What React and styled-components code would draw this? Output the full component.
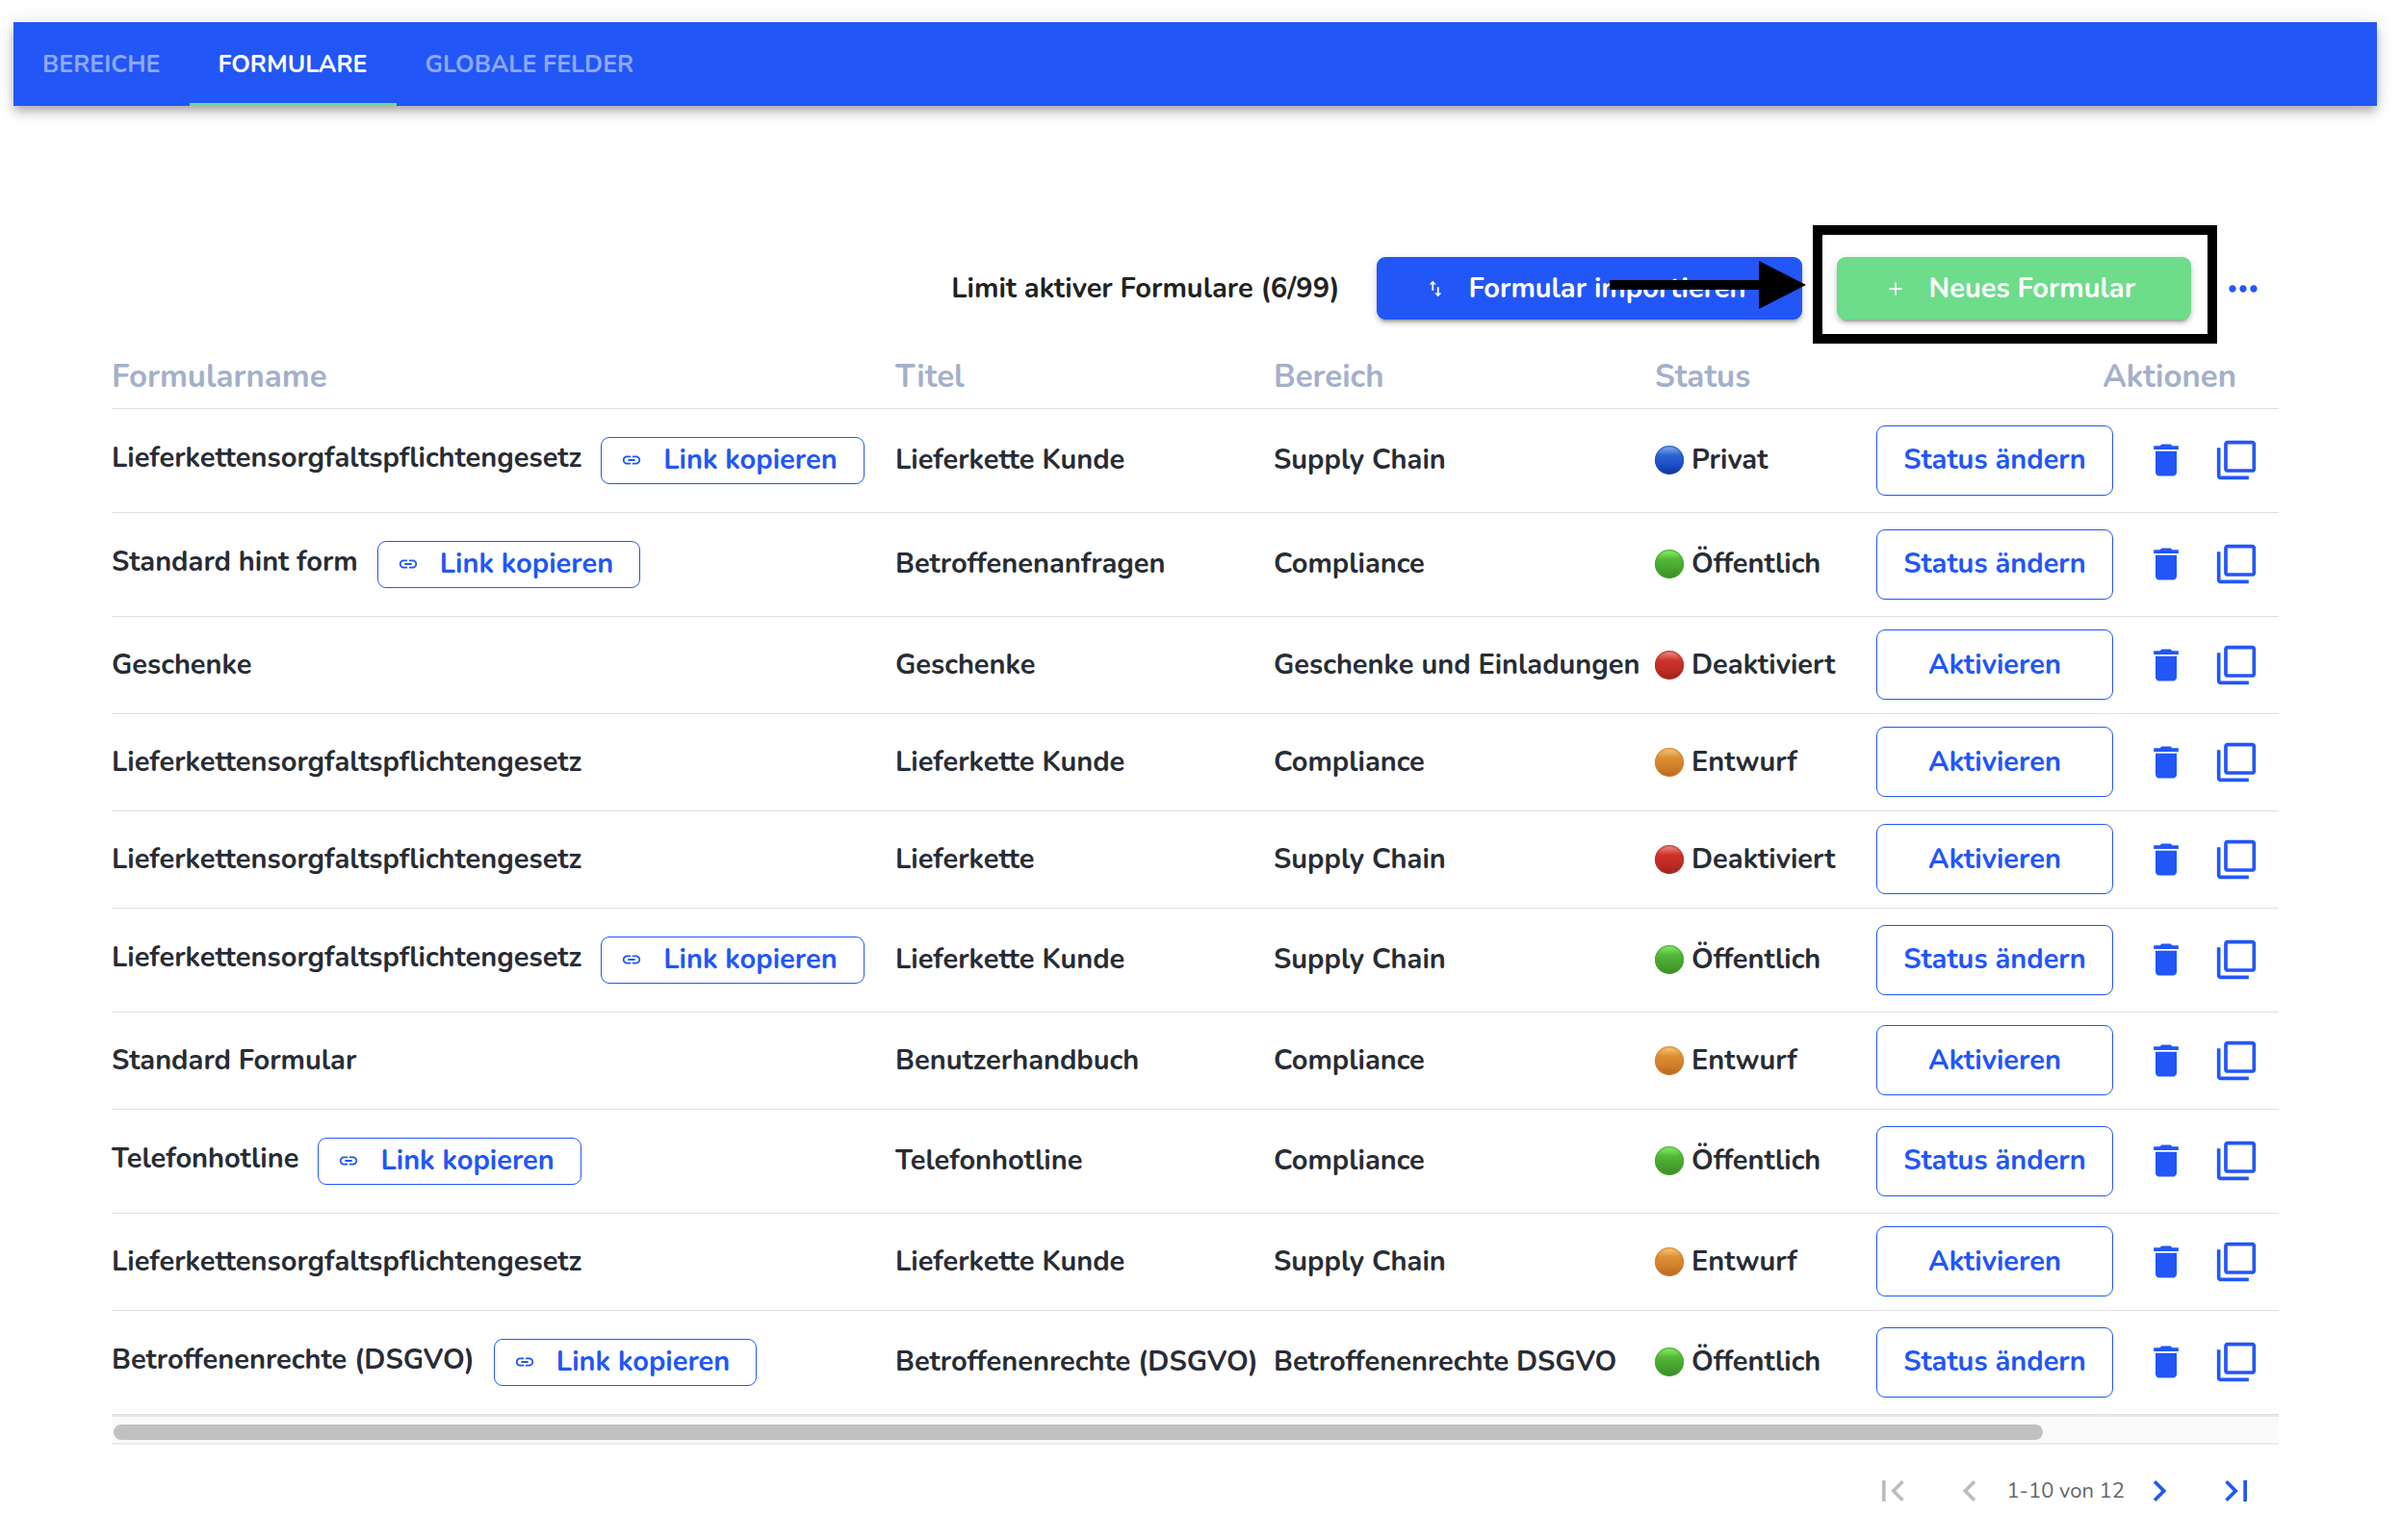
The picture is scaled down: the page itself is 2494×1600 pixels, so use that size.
import React, { useState } from 'react';
import styled, { createGlobalStyle } from 'styled-components';
import {
  MdAdd,
  MdChevronLeft,
  MdChevronRight,
  MdDelete,
  MdFilterNone,
  MdFirstPage,
  MdImportExport,
  MdInsertLink,
  MdLastPage,
  MdMoreHoriz,
} from 'react-icons/md';

const blue = '#2256f7';
const green = '#6ddc8b';
const ink = '#282c34';
const muted = '#a4b0cb';
const line = '#e0e0e0';

const GlobalStyle = createGlobalStyle`
  * {
    box-sizing: border-box;
  }

  body {
    margin: 0;
    background: #fff;
    color: ${ink};
    font-family: Nunito, "Noto Sans", sans-serif;
    font-size: 29px;
    font-weight: 700;
    line-height: 40px;
  }

  button {
    font: inherit;
    cursor: pointer;
  }
`;

const Page = styled.div`
  padding: 23px 25px 0 14px;
`;

const TabBar = styled.nav`
  display: flex;
  background: ${blue};
  box-shadow: 0 4px 8px -2px rgba(0, 0, 0, .2), 0 8px 10px rgba(0, 0, 0, .14), 0 2px 20px rgba(0, 0, 0, .12);
`;

const Tab = styled.a`
  height: 87px;
  padding: 0 30px;
  border-bottom: 3px solid ${(props) => (props.$active ? green : 'transparent')};
  color: ${(props) => (props.$active ? '#fff' : '#8ea9fb')};
  font-size: 25px;
  line-height: 88px;
  text-decoration: none;
  text-transform: uppercase;
`;

const Content = styled.main`
  padding: 157px 102px 0;
`;

const Toolbar = styled.div`
  display: flex;
  align-items: center;
  justify-content: flex-end;
  padding-right: 15px;
`;

const Limit = styled.span`
  margin-right: 38px;
  color: #222;
`;

const ActionButton = styled.button`
  display: flex;
  align-items: center;
  gap: 24px;
  height: 65px;
  padding: 0 58px 0 50px;
  border: 0;
  border-radius: 9px;
  background: ${(props) => (props.$color)};
  box-shadow: 0 6px 2px -4px rgba(0, 0, 0, .2), 0 4px 4px rgba(0, 0, 0, .14), 0 2px 10px rgba(0, 0, 0, .12);
  color: #fff;
`;

const Highlight = styled.div`
  position: relative;
  margin-left: 36px;

  &::after {
    content: '';
    position: absolute;
    inset: -33px -27px -25px -25px;
    border: 10px solid #000;
    pointer-events: none;
  }
`;

const Arrow = styled.svg`
  position: absolute;
  right: 100%;
  top: 4px;
  margin-right: 32px;
  pointer-events: none;
`;

const MoreButton = styled.button`
  display: flex;
  margin-left: 32px;
  padding: 0;
  border: 0;
  background: none;
  color: ${blue};
`;

const Table = styled.table`
  width: 100%;
  margin-top: 24px;
  border-collapse: collapse;
  table-layout: fixed;
`;

const Th = styled.th`
  width: ${(props) => props.$width || 'auto'};
  height: 68px;
  padding: 4px ${(props) => (props.$right ? '44px' : '0')} 0 0;
  border-bottom: 1px solid ${line};
  color: ${muted};
  font-size: 33px;
  font-weight: 700;
  text-align: ${(props) => (props.$right ? 'right' : 'left')};
`;

const Tr = styled.tr`
  height: ${(props) => (props.$tall ? '108px' : '101px')};
`;

const Td = styled.td`
  padding: 0;
  border-bottom: 1px solid ${line};
  white-space: nowrap;
`;

const Cell = styled.div`
  display: flex;
  align-items: center;
  gap: ${(props) => props.$gap || '0'};
`;

const FormName = styled.span`
  padding-bottom: ${(props) => (props.$raised ? '4px' : '0')};
`;

const LinkButton = styled.button`
  display: flex;
  align-items: center;
  gap: 22px;
  height: 49px;
  padding: 0 27px 0 20px;
  border: 1px solid ${blue};
  border-radius: 9px;
  background: #fff;
  color: ${blue};
`;

const StatusButton = styled.button`
  width: 246px;
  height: 73px;
  margin-right: 33px;
  border: 1px solid ${blue};
  border-radius: 9px;
  background: #fff;
  color: ${blue};
`;

const IconButton = styled.button`
  display: flex;
  padding: ${(props) => props.$padding || '0'};
  border: 0;
  background: none;
  color: ${blue};

  &:disabled {
    color: #bdbdbd;
  }
`;

const Dot = styled.span`
  width: 30px;
  height: 30px;
  border-radius: 50%;
  background: linear-gradient(${(props) => props.$colors.join(', ')});
  box-shadow: inset 0 0 2px 1px ${(props) => props.$colors[2]};
`;

const ScrollTrack = styled.div`
  height: 31px;
  padding: 8px 2px 7px;
  border-top: 2px solid #e6e6e6;
  border-bottom: 2px solid #ececec;
  background: #fafafa;
`;

const ScrollThumb = styled.div`
  width: 89.2%;
  height: 16px;
  border-radius: 8px;
  background: #c1c1c1;
`;

const Pagination = styled.div`
  display: flex;
  align-items: center;
  justify-content: flex-end;
  padding: 8px 4px 0 0;
`;

const PageInfo = styled.span`
  margin: 0 -4px 0 -2px;
  color: #666;
  font-size: 22px;
  font-weight: 400;
`;

const statuses = {
  Privat: ['#8fb8f4', '#2f63d0', '#1b4fc4', '#12309c'],
  Öffentlich: ['#8cf86f', '#55b739', '#46a32e', '#3c8a28'],
  Deaktiviert: ['#ee9a95', '#cf332b', '#bd2c24', '#97241e'],
  Entwurf: ['#f6cf85', '#dd8f33', '#d07f2b', '#b8631f'],
};

const forms = [
  { name: 'Lieferkettensorgfaltspflichtengesetz', link: true, title: 'Lieferkette Kunde', area: 'Supply Chain', status: 'Privat' },
  { name: 'Standard hint form', link: true, title: 'Betroffenenanfragen', area: 'Compliance', status: 'Öffentlich' },
  { name: 'Geschenke', title: 'Geschenke', area: 'Geschenke und Einladungen', status: 'Deaktiviert' },
  { name: 'Lieferkettensorgfaltspflichtengesetz', title: 'Lieferkette Kunde', area: 'Compliance', status: 'Entwurf' },
  { name: 'Lieferkettensorgfaltspflichtengesetz', title: 'Lieferkette', area: 'Supply Chain', status: 'Deaktiviert' },
  { name: 'Lieferkettensorgfaltspflichtengesetz', link: true, title: 'Lieferkette Kunde', area: 'Supply Chain', status: 'Öffentlich' },
  { name: 'Standard Formular', title: 'Benutzerhandbuch', area: 'Compliance', status: 'Entwurf' },
  { name: 'Telefonhotline', link: true, title: 'Telefonhotline', area: 'Compliance', status: 'Öffentlich' },
  { name: 'Lieferkettensorgfaltspflichtengesetz', title: 'Lieferkette Kunde', area: 'Supply Chain', status: 'Entwurf' },
  { name: 'Betroffenenrechte (DSGVO)', link: true, title: 'Betroffenenrechte (DSGVO)', area: 'Betroffenenrechte DSGVO', status: 'Öffentlich' },
];

const tabs = ['Bereiche', 'Formulare', 'Globale Felder'];

function FormRow({ form }) {
  return (
    <Tr $tall={form.link}>
      <Td>
        <Cell $gap="20px">
          <FormName $raised={form.link}>{form.name}</FormName>
          {form.link && (
            <LinkButton type="button">
              <MdInsertLink size={22} />
              Link kopieren
            </LinkButton>
          )}
        </Cell>
      </Td>
      <Td>{form.title}</Td>
      <Td>{form.area}</Td>
      <Td>
        <Cell $gap="8px">
          <Dot $colors={statuses[form.status]} />
          {form.status}
        </Cell>
      </Td>
      <Td>
        <Cell>
          <StatusButton type="button">
            {form.link ? 'Status ändern' : 'Aktivieren'}
          </StatusButton>
          <Cell $gap="29px">
            <IconButton type="button" aria-label="Löschen">
              <MdDelete size={44} />
            </IconButton>
            <IconButton type="button" aria-label="Duplizieren">
              <MdFilterNone size={44} />
            </IconButton>
          </Cell>
        </Cell>
      </Td>
    </Tr>
  );
}

function App() {
  const [activeTab, setActiveTab] = useState('Formulare');

  return (
    <Page>
      <GlobalStyle />
      <TabBar>
        {tabs.map((tab) => (
          <Tab key={tab} href="#" $active={tab === activeTab} onClick={() => setActiveTab(tab)}>
            {tab}
          </Tab>
        ))}
      </TabBar>
      <Content>
        <Toolbar>
          <Limit>Limit aktiver Formulare (6/99)</Limit>
          <ActionButton type="button" $color={blue}>
            <MdImportExport size={22} />
            Formular importieren
          </ActionButton>
          <Highlight>
            <ActionButton type="button" $color={green}>
              <MdAdd size={22} />
              Neues Formular
            </ActionButton>
            <Arrow width="204" height="50" viewBox="0 0 204 50" aria-hidden="true">
              <path d="M0 20H155V0L204 25L155 50V30H0Z" />
            </Arrow>
          </Highlight>
          <MoreButton type="button" aria-label="Mehr">
            <MdMoreHoriz size={44} />
          </MoreButton>
        </Toolbar>
        <Table>
          <thead>
            <tr>
              <Th>Formularname</Th>
              <Th $width="393px">Titel</Th>
              <Th $width="396px">Bereich</Th>
              <Th $width="230px">Status</Th>
              <Th $width="418px" $right>Aktionen</Th>
            </tr>
          </thead>
          <tbody>
            {forms.map((form, index) => (
              <FormRow key={index} form={form} />
            ))}
          </tbody>
        </Table>
        <ScrollTrack>
          <ScrollThumb />
        </ScrollTrack>
        <Pagination>
          <IconButton type="button" $padding="18px" aria-label="Erste Seite" disabled>
            <MdFirstPage size={44} />
          </IconButton>
          <IconButton type="button" $padding="18px" aria-label="Vorherige Seite" disabled>
            <MdChevronLeft size={44} />
          </IconButton>
          <PageInfo>1-10 von 12</PageInfo>
          <IconButton type="button" $padding="18px" aria-label="Nächste Seite">
            <MdChevronRight size={44} />
          </IconButton>
          <IconButton type="button" $padding="18px" aria-label="Letzte Seite">
            <MdLastPage size={44} />
          </IconButton>
        </Pagination>
      </Content>
    </Page>
  );
}

export default App;
